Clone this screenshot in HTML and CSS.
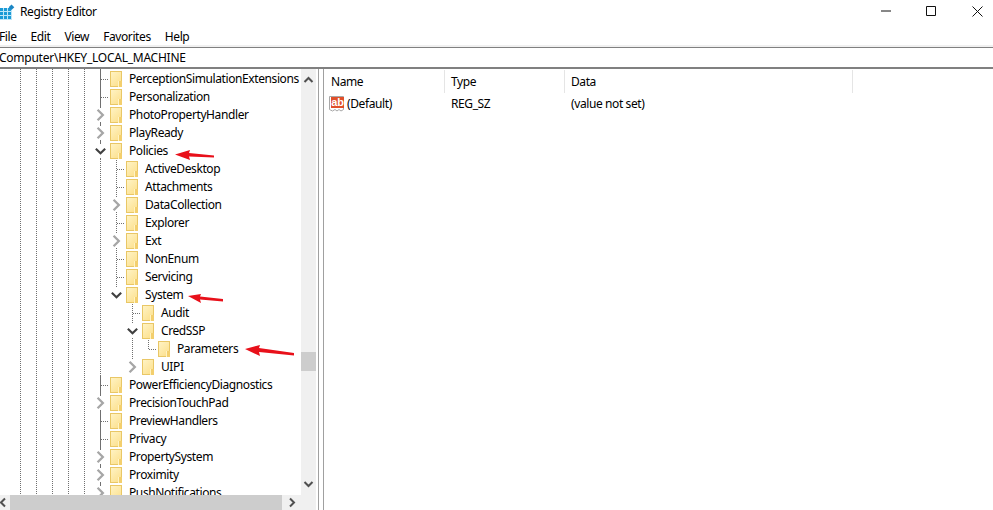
FILE: index.html
```html
<!DOCTYPE html>
<html lang="en">
<head>
    <meta charset="UTF-8">
    <meta name="viewport" content="width=device-width, initial-scale=1.0">
    <title>Registry Editor</title>
    <link rel="stylesheet" href="styles.css">
</head>
<body>
    <svg class="defs" width="0" height="0">
        <symbol id="chev-right" viewBox="0 0 9 12"><path d="M2 1.500 6.500 6 2 10.500" fill="none" stroke="#a6a6a6" stroke-width="2"/></symbol>
        <symbol id="chev-down" viewBox="0 0 9 12"><path d="M.5 4 4.500 8 8.500 4" fill="none" stroke="#404040" stroke-width="1.800"/></symbol>
    </svg>

    <header class="titlebar">
        <svg class="app-icon" width="15" height="20" viewBox="0 0 15 20">
            <path d="M0 6h12v12H0z" fill="#1b9ad6"/>
            <path d="M3.500 6v12M7.500 6v12M11.500 6v12M0 9.500h12M0 13.500h12M0 17.500h12" stroke="#bfe6f7" stroke-width="1"/>
            <path d="M11.500 2.500l2.800 2.800-2.800 2.800-2.800-2.800z" fill="#1b86c4"/>
        </svg>
        <span class="app-name">Registry Editor</span>
        <div class="win-buttons">
            <svg width="112" height="12" viewBox="0 0 112 12">
                <path d="M0 6h10" stroke="#111" stroke-width="1"/>
                <path d="M45.500 1.500h9v9h-9z" fill="none" stroke="#111" stroke-width="1"/>
                <path d="M91.500 1.500l10 10M101.500 1.500l-10 10" stroke="#111" stroke-width="1"/>
            </svg>
        </div>
    </header>

    <nav class="menubar">
        <span>File</span><span>Edit</span><span>View</span><span>Favorites</span><span>Help</span>
    </nav>

    <div class="strip"></div>
    <div class="address">Computer\HKEY_LOCAL_MACHINE</div>

    <main class="panes">
        <section class="left-pane">
            <div class="tree-area">
                <div class="tree">
                    <div class="row"><span class="cell leaf"></span><span class="folder"></span><span class="name">PerceptionSimulationExtensions</span></div>
                    <div class="row"><span class="cell leaf"></span><span class="folder"></span><span class="name">Personalization</span></div>
                    <div class="row"><span class="cell twist"><svg width="9" height="12"><use href="#chev-right"/></svg></span><span class="folder"></span><span class="name">PhotoPropertyHandler</span></div>
                    <div class="row"><span class="cell twist"><svg width="9" height="12"><use href="#chev-right"/></svg></span><span class="folder"></span><span class="name">PlayReady</span></div>
                    <div class="row"><span class="cell twist"><svg width="9" height="12"><use href="#chev-down"/></svg></span><span class="folder"></span><span class="name">Policies</span></div>

                    <div class="row lv1"><span class="cell leaf"></span><span class="folder"></span><span class="name">ActiveDesktop</span></div>
                    <div class="row lv1"><span class="cell leaf"></span><span class="folder"></span><span class="name">Attachments</span></div>
                    <div class="row lv1"><span class="cell twist"><svg width="9" height="12"><use href="#chev-right"/></svg></span><span class="folder"></span><span class="name">DataCollection</span></div>
                    <div class="row lv1"><span class="cell leaf"></span><span class="folder"></span><span class="name">Explorer</span></div>
                    <div class="row lv1"><span class="cell twist"><svg width="9" height="12"><use href="#chev-right"/></svg></span><span class="folder"></span><span class="name">Ext</span></div>
                    <div class="row lv1"><span class="cell leaf"></span><span class="folder"></span><span class="name">NonEnum</span></div>
                    <div class="row lv1"><span class="cell leaf"></span><span class="folder"></span><span class="name">Servicing</span></div>
                    <div class="row lv1"><span class="cell twist last"><svg width="9" height="12"><use href="#chev-down"/></svg></span><span class="folder"></span><span class="name">System</span></div>

                    <div class="row lv2"><span class="cell leaf"></span><span class="folder"></span><span class="name">Audit</span></div>
                    <div class="row lv2"><span class="cell twist"><svg width="9" height="12"><use href="#chev-down"/></svg></span><span class="folder"></span><span class="name">CredSSP</span></div>
                    <div class="row lv2"><span class="cell line"></span><span class="cell end"></span><span class="folder"></span><span class="name">Parameters</span></div>
                    <div class="row lv2"><span class="cell twist last"><svg width="9" height="12"><use href="#chev-right"/></svg></span><span class="folder"></span><span class="name">UIPI</span></div>

                    <div class="row"><span class="cell leaf"></span><span class="folder"></span><span class="name">PowerEfficiencyDiagnostics</span></div>
                    <div class="row"><span class="cell twist"><svg width="9" height="12"><use href="#chev-right"/></svg></span><span class="folder"></span><span class="name">PrecisionTouchPad</span></div>
                    <div class="row"><span class="cell leaf"></span><span class="folder"></span><span class="name">PreviewHandlers</span></div>
                    <div class="row"><span class="cell leaf"></span><span class="folder"></span><span class="name">Privacy</span></div>
                    <div class="row"><span class="cell twist"><svg width="9" height="12"><use href="#chev-right"/></svg></span><span class="folder"></span><span class="name">PropertySystem</span></div>
                    <div class="row"><span class="cell twist"><svg width="9" height="12"><use href="#chev-right"/></svg></span><span class="folder"></span><span class="name">Proximity</span></div>
                    <div class="row"><span class="cell twist"><svg width="9" height="12"><use href="#chev-right"/></svg></span><span class="folder"></span><span class="name">PushNotifications</span></div>
                </div>
                <div class="vscroll">
                    <svg class="sb-arrow" width="15" height="20" viewBox="0 0 15 20"><path d="M3.500 13 7.500 9l4 4" fill="none" stroke="#505050" stroke-width="2"/></svg>
                    <div class="vspace"></div>
                    <div class="vthumb"></div>
                    <div class="vrest"></div>
                    <svg class="sb-arrow" width="15" height="20" viewBox="0 0 15 20"><path d="M3.500 7l4 4 4-4" fill="none" stroke="#505050" stroke-width="2"/></svg>
                </div>
            </div>
            <div class="hscroll">
                <svg class="sb-left" width="10" height="15" viewBox="0 0 10 15"><path d="M5 3.500l-4 4 4 4" fill="none" stroke="#505050" stroke-width="2"/></svg>
                <div class="hthumb"></div>
                <svg class="sb-right" width="34" height="15" viewBox="0 0 34 15"><path d="M8 3.500l4 4-4 4" fill="none" stroke="#505050" stroke-width="2"/></svg>
            </div>
        </section>

        <div class="splitter"></div>

        <section class="list">
            <div class="list-head">
                <div class="col col-name">Name</div>
                <div class="col col-type">Type</div>
                <div class="col col-data">Data</div>
            </div>
            <div class="list-row">
                <div class="col-name value-name">
                    <svg class="value-icon" width="16" height="16" viewBox="0 0 16 16">
                        <path d="M.5.500h14v13l-2.500 1.500-2-1.500-2 1.500-2-1.500-2.500 1.500-3-1.500z" fill="#fff" stroke="#a8a8a8"/>
                        <rect x="2" y="1" width="13" height="11" fill="#e0502a"/>
                        <text class="ab" x="8.500" y="10">ab</text>
                    </svg>
                    <span>(Default)</span>
                </div>
                <div class="col-type">REG_SZ</div>
                <div class="col-data">(value not set)</div>
            </div>
        </section>
    </main>

    <!-- red arrows drawn on top of the screenshot -->
    <svg class="annotations" width="993" height="510" viewBox="0 0 993 510">
        <path d="M175 154.500 190 150l-1 3 25 2.500v2l-25-1 1 3.500z"/>
        <path d="M188 296 201 294l-1 2.500 23 2.500v2.500l-23-2 1 3.500z"/>
        <path d="M245 349 260 345l-1 3 35 5v2.500l-35-3.500 1 4z"/>
    </svg>
</body>
</html>
```

FILE: styles.css
```css
* {
    box-sizing: border-box;
}
html, body {
    height: 100%;
    margin: 0;
    overflow: hidden;
}
body {
    display: flex;
    flex-direction: column;
    position: relative;
    background: #fff;
    color: #000;
    font-family: 'Noto Sans', 'Open Sans', sans-serif;
    font-size: 12px;
    letter-spacing: -0.4px;
}
.defs {
    position: absolute;
}

/* title bar */
.titlebar {
    display: flex;
    align-items: center;
    height: 24px;
    flex: none;
}
.app-icon {
    margin-right: 5px;
}
.app-name {
    line-height: 24px;
}
.win-buttons {
    display: flex;
    margin-left: auto;
    height: 12px;
    margin-top: -2px;
}

/* menu */
.menubar {
    display: flex;
    flex: none;
    height: 21px;
    line-height: 25px;
    margin-left: -1px;
    gap: 14px;
}

.strip {
    flex: none;
    height: 2px;
    background: #f0f0f0;
}
.address {
    flex: none;
    height: 22px;
    line-height: 19px;
    margin-left: -1px;
    letter-spacing: -0.25px;
    border-top: 1px solid #808080;
    border-bottom: 2px solid #808080;
}

.panes {
    display: flex;
    flex: 1;
    min-height: 0;
}

/* left pane: tree and its scrollbars */
.left-pane {
    display: flex;
    flex-direction: column;
    flex: none;
    width: 318px;
    min-height: 0;
}
.tree-area {
    display: flex;
    flex: 1;
    min-height: 0;
    padding-right: 2px;
}
.tree {
    flex: 1;
    overflow: hidden;
    padding-top: 1px;
    background-image:
        linear-gradient(#707070 50%, transparent 50%),
        linear-gradient(#707070 50%, transparent 50%),
        linear-gradient(#707070 50%, transparent 50%),
        linear-gradient(#707070 50%, transparent 50%),
        linear-gradient(#707070 50%, transparent 50%),
        linear-gradient(#707070 50%, transparent 50%);
    background-size: 1px 2px;
    background-repeat: repeat-y;
    background-position: 20px 0, 36px 0, 52px 0, 68px 0, 84px 0, 100px 0;
}
.row {
    display: flex;
    align-items: center;
    height: 18px;
    padding-left: 92px;
    white-space: nowrap;
}
.row.lv1 {
    padding-left: 108px;
}
.row.lv2 {
    padding-left: 124px;
}
.cell {
    display: flex;
    align-items: center;
    justify-content: center;
    flex: none;
    width: 16px;
    height: 18px;
}
.line, .twist {
    background: linear-gradient(#707070 50%, transparent 50%) 8px 0 / 1px 2px repeat-y;
}
.leaf {
    background:
        repeating-linear-gradient(to right, #707070 0 1px, transparent 1px 2px) 9px 9px / 7px 1px no-repeat,
        linear-gradient(#707070 50%, transparent 50%) 8px 0 / 1px 2px repeat-y;
}
.end {
    background:
        repeating-linear-gradient(to right, #707070 0 1px, transparent 1px 2px) 9px 9px / 7px 1px no-repeat,
        repeating-linear-gradient(#707070 0 1px, transparent 1px 2px) 8px 0 / 1px 9px no-repeat;
}
.twist svg {
    display: block;
    width: 11px;
    height: 14px;
    background: #fff;
}
.twist.last {
    background: repeating-linear-gradient(#707070 0 1px, transparent 1px 2px) 8px 0 / 1px 3px no-repeat;
}
.folder {
    position: relative;
    flex: none;
    width: 12px;
    height: 16px;
    margin-left: 2px;
    border: 1px solid #e9c766;
    background: linear-gradient(135deg, #fff3c4, #fcdf8a);
}
.folder::after {
    content: "";
    position: absolute;
    right: -1px;
    bottom: -1px;
    width: 3px;
    height: 6px;
    background: #f3cf6e;
    border-left: 1px solid #fff3c4;
}
.name {
    margin-left: 7px;
    margin-bottom: 2px;
}

.vscroll {
    display: flex;
    flex-direction: column;
    flex: none;
    width: 15px;
    background: #f0f0f0;
}
.sb-arrow {
    flex: none;
}
.vspace {
    flex: none;
    height: 263px;
}
.vthumb {
    flex: none;
    height: 19px;
    background: #cdcdcd;
}
.vrest {
    flex: 1;
}
.hscroll {
    display: flex;
    flex: none;
    height: 15px;
    margin-right: 2px;
    background: #f0f0f0;
}
.sb-left {
    flex: none;
}
.hthumb {
    flex: none;
    width: 272px;
    background: #cdcdcd;
}

.splitter {
    flex: none;
    width: 6px;
    border-left: 1px solid #a0a0a0;
    border-right: 1px solid #a0a0a0;
}

/* right pane */
.list {
    flex: 1;
    min-width: 0;
}
.list-head {
    display: flex;
    height: 23px;
    margin-top: 1px;
    line-height: 23px;
}
.col {
    border-right: 1px solid #e5e5e5;
    padding-left: 7px;
}
.col-name {
    flex: none;
    width: 121px;
}
.col-type {
    flex: none;
    width: 120px;
    padding-left: 6px;
}
.col-data {
    flex: none;
    width: 288px;
    padding-left: 6px;
}
.list-row {
    display: flex;
    height: 18px;
    margin-top: 2px;
    line-height: 18px;
}
.value-name {
    display: flex;
    align-items: center;
    padding-left: 5px;
}
.value-icon {
    margin-right: 2px;
}
.ab {
    font-family: 'Liberation Sans', sans-serif;
    font-size: 11px;
    font-weight: 700;
    letter-spacing: -0.2px;
    text-anchor: middle;
    fill: #fff;
}

.annotations {
    position: absolute;
    left: 0;
    top: 0;
    pointer-events: none;
    fill: #e8101a;
}
```
